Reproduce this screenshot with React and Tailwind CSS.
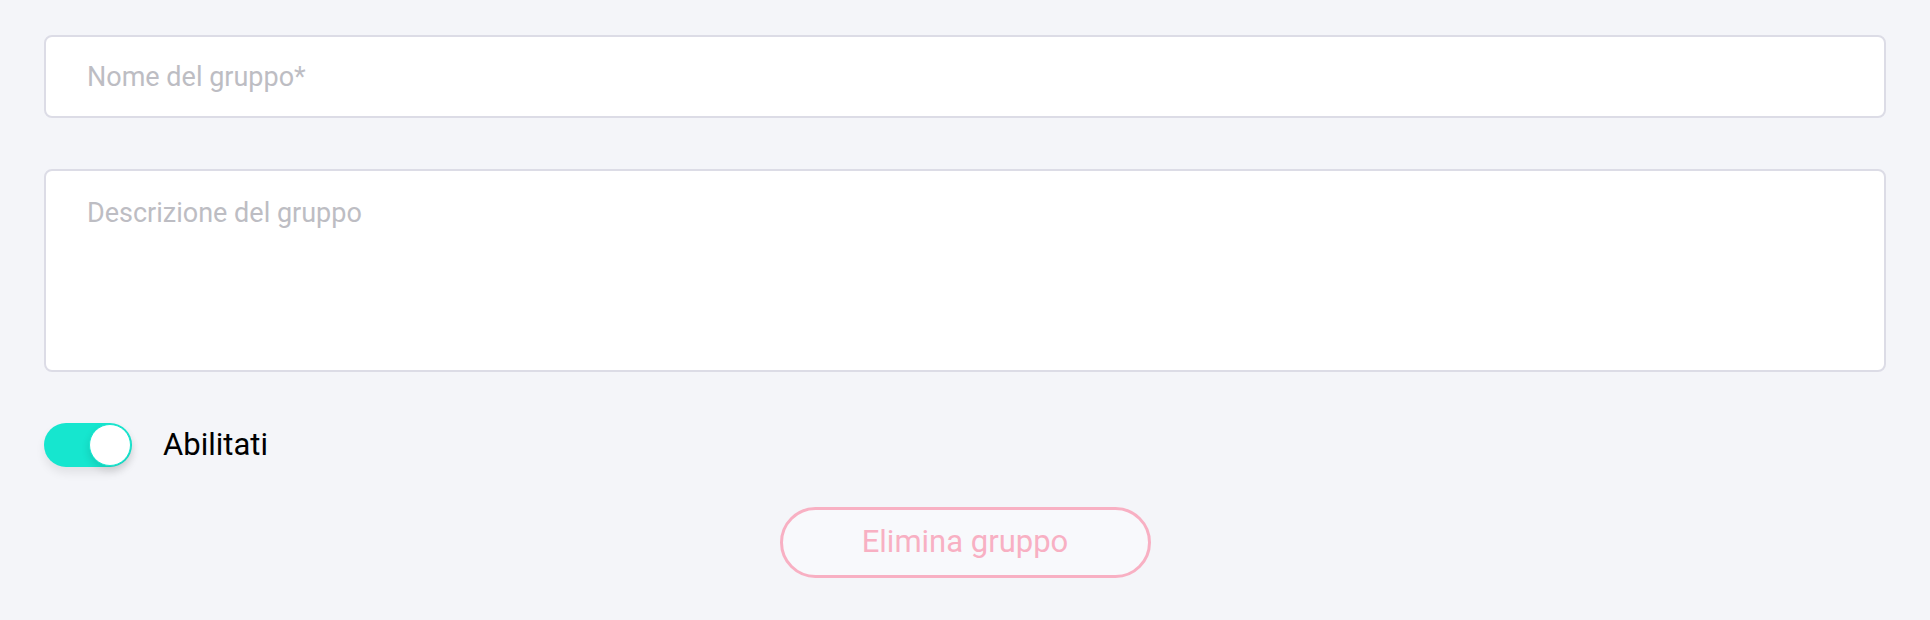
import React, { useState } from 'react';

export default function App() {
  const [enabled, setEnabled] = useState(true);

  return (
    <div className="min-h-[620px] w-full bg-[#f4f5f9] px-[44px] pt-[35px] font-['Roboto',sans-serif]">
      {/* Group name */}
      <input
        type="text"
        placeholder="Nome del gruppo*"
        className="block h-[83px] w-full rounded-[8px] border-2 border-[#dcdce6] bg-white pl-[41px] text-[27px] text-[#333] outline-none placeholder:text-[#bdbdc3]"
      />

      {/* Group description */}
      <textarea
        placeholder="Descrizione del gruppo"
        className="mt-[51px] block h-[203px] w-full resize-none rounded-[8px] border-2 border-[#dcdce6] bg-white pl-[41px] pt-[22px] text-[27px] leading-[40px] text-[#333] outline-none placeholder:text-[#bdbdc3]"
      />

      {/* Enabled toggle */}
      <div className="mt-[51px] flex h-[44px] items-center gap-[31px]">
        <button
          onClick={() => setEnabled(!enabled)}
          className={`relative h-[44px] w-[88px] rounded-full shadow-[0_6px_10px_rgba(0,0,0,0.08)] ${enabled ? 'bg-[#16e6cf]' : 'bg-[#d5d6de]'}`}
        >
          <span
            className={`absolute top-[1px] h-[42px] w-[42px] rounded-full border border-[#16e6cf] bg-white shadow-[0_4px_8px_rgba(0,0,0,0.12)] ${enabled ? 'right-[1px]' : 'left-[1px]'}`}
          />
        </button>
        <span className="text-[31px] leading-[44px] text-black">Abilitati</span>
      </div>

      {/* Delete */}
      <div className="mt-[40px] flex justify-center">
        <button className="h-[71px] w-[371px] rounded-full border-[3px] border-[#f8b0c3] bg-[#f8f9fc] text-[31px] text-[#f8b0c3]">
          Elimina gruppo
        </button>
      </div>
    </div>
  );
}
